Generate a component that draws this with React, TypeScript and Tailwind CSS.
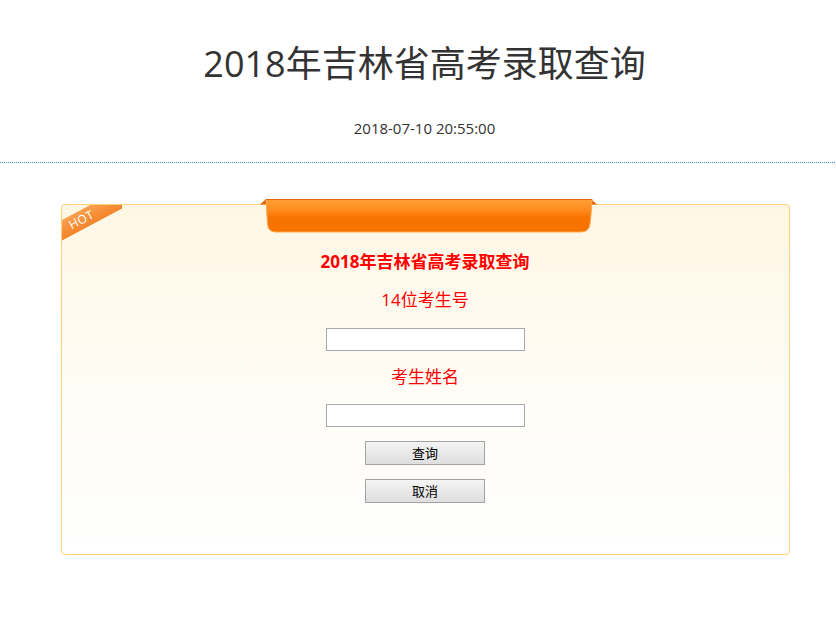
import React from "react";

const font = { fontFamily: '"Open Sans", "Noto Sans CJK SC", sans-serif' };

function Tab() {
  return (
    <svg width="339" height="34" viewBox="0 0 339 34" className="absolute left-[197px] top-[-6px]">
      <defs>
        <linearGradient id="tabg" x1="0" y1="0" x2="0" y2="1">
          <stop offset="0" stopColor="#ffa137" />
          <stop offset="0.35" stopColor="#ff8a1c" />
          <stop offset="0.55" stopColor="#f77402" />
          <stop offset="1" stopColor="#f77300" />
        </linearGradient>
      </defs>
      <path d="M1,5.5 L7,0 L7,5.5 Z" fill="#e2620c" />
      <path d="M332,0 L338,5.5 L332,5.5 Z" fill="#e2620c" />
      <path
        d="M7,0 L333,0 C332.5,9 332,18 331,25 Q330,33 322,33 L17,33 Q9,33 8.5,25 C8,18 7.5,9 7,0 Z"
        fill="url(#tabg)"
        stroke="#ffa84e"
        strokeWidth="1"
      />
      <path d="M7,0.5 L333,0.5" stroke="#e8680e" strokeWidth="1" />
    </svg>
  );
}

function Hot() {
  return (
    <div className="absolute left-0 top-0 w-[60px] h-[42px] overflow-hidden rounded-tl-[4px]">
      <div className="absolute left-[-17px] top-[4px] w-[80px] h-[18px] bg-[linear-gradient(180deg,#f9a04f,#f3842a)] rotate-[-28deg] flex items-center justify-center">
        <span className="text-white text-[12px] leading-none tracking-[0.5px] -ml-[8px]" style={font}>
          HOT
        </span>
      </div>
    </div>
  );
}

export default function App() {
  return (
    <div className="w-full min-h-[618px] bg-white" style={font}>
      <div className="pl-[13px] pb-[24px]">
        <h1 className="pt-[42px] text-center text-[36px] leading-[44px] text-[#333] font-normal">
          2018年吉林省高考录取查询
        </h1>
        <div className="mt-[32px] text-center text-[15px] leading-[20px] text-[#333]">
          2018-07-10 20:55:00
        </div>
      </div>
      <div className="h-px w-full bg-[repeating-linear-gradient(90deg,#2f8bd4_0px,#2f8bd4_1px,transparent_1px,transparent_2px)]" />
      <div className="pl-[13px]">
        <div className="relative ml-[48px] mt-[41px] w-[729px] h-[351px] rounded-[4px] border border-[#ffd07a] bg-gradient-to-b from-[#fff7e4] via-[#fffdf8] via-60% to-white">
          <Tab />
          <Hot />
          <div className="flex flex-col items-center pt-[45px] pr-[1px]">
            <div className="text-[17px] leading-[24px] font-bold text-[#ff0000]">2018年吉林省高考录取查询</div>
            <div className="mt-[14px] text-[17px] leading-[24px] text-[#ff0000]">14位考生号</div>
            <input className="mt-[16px] w-[199px] h-[23px] border border-[#a9a9a9] bg-white outline-none" />
            <div className="mt-[14px] text-[17px] leading-[24px] text-[#ff0000]">考生姓名</div>
            <input className="mt-[15px] w-[199px] h-[23px] border border-[#a9a9a9] bg-white outline-none" />
            <button className="mt-[14px] w-[120px] h-[24px] border border-[#a3a3a3] bg-gradient-to-b from-[#f4f4f4] to-[#dedede] text-[13px] leading-none text-black">
              查询
            </button>
            <button className="mt-[14px] w-[120px] h-[24px] border border-[#a3a3a3] bg-gradient-to-b from-[#f4f4f4] to-[#dedede] text-[13px] leading-none text-black">
              取消
            </button>
          </div>
        </div>
      </div>
    </div>
  );
}
